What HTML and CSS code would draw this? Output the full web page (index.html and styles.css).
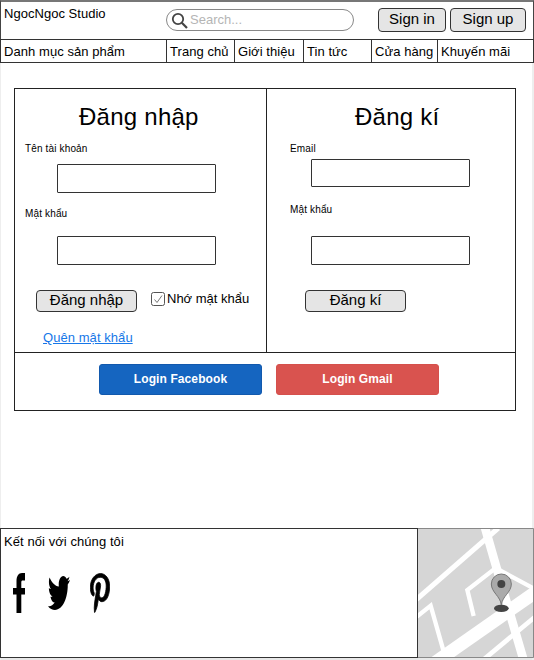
FILE: index.html
```html
<!DOCTYPE html>
<html lang="vi">
<head>
<meta charset="utf-8">
<title>NgocNgoc Studio</title>
<link rel="stylesheet" href="styles.css">
</head>
<body>
<div class="page">
  <header class="header">
    <div class="brand">NgocNgoc Studio</div>
    <div class="search">
      <svg class="search-icon" width="18" height="18" viewBox="0 0 18 18"><circle cx="7" cy="7" r="5.2" fill="none" stroke="#444" stroke-width="1.8"/><path d="M10.8 10.8L16 16" stroke="#444" stroke-width="2.2"/></svg>
      <span>Search...</span>
    </div>
    <button class="btn btn-in">Sign in</button>
    <button class="btn btn-up">Sign up</button>
  </header>
  <nav class="nav">
    <a>Danh mục sản phẩm</a><a>Trang chủ</a><a>Giới thiệu</a><a>Tin tức</a><a>Cửa hàng</a><a>Khuyến mãi</a>
  </nav>
  <main class="panel">
    <div class="forms">
      <section class="form login">
        <h1>Đăng nhập</h1>
        <label>Tên tài khoản</label>
        <div class="field"></div>
        <label class="second">Mật khẩu</label>
        <div class="field"></div>
        <div class="actions">
          <button class="btn btn-form">Đăng nhập</button>
          <svg class="check" width="14" height="14" viewBox="0 0 14 14"><rect x=".5" y=".5" width="13" height="13" rx="2" fill="#fff" stroke="#555"/><path d="M3.5 7.5L6 10.5L11 3.5" fill="none" stroke="#777"/></svg>
          <span class="remember">Nhớ mật khẩu</span>
        </div>
        <a class="forgot">Quên mật khẩu</a>
      </section>
      <section class="form register">
        <h1>Đăng kí</h1>
        <label>Email</label>
        <div class="field"></div>
        <label class="second">Mật khẩu</label>
        <div class="field"></div>
        <div class="actions">
          <button class="btn btn-form">Đăng kí</button>
        </div>
      </section>
    </div>
    <div class="social-login">
      <button class="social facebook">Login Facebook</button>
      <button class="social gmail">Login Gmail</button>
    </div>
  </main>
  <footer class="footer">
    <div class="connect">
      <p>Kết nối với chúng tôi</p>
      <div class="icons">
        <svg width="12" height="40" viewBox="0 0 12 40"><path d="M3.5 40V21.5H0V15h3.5V8.500C3.500 3 5.500 0 9 0H12V7.500H9.700C8.700 7.500 8.300 8 8.300 9.500V15H12V21.500H8.300V40Z"/></svg>
        <svg class="bird" width="22" height="34" viewBox="0 48 512 416" preserveAspectRatio="none"><path d="M459.37 151.716c.325 4.548.325 9.097.325 13.645 0 138.72-105.583 298.558-298.558 298.558-59.452 0-114.68-17.219-161.137-47.106 8.447.974 16.568 1.299 25.34 1.299 49.055 0 94.213-16.568 130.274-44.832-46.132-.975-84.792-31.188-98.112-72.772 6.498.974 12.995 1.624 19.818 1.624 9.421 0 18.843-1.3 27.614-3.573-48.081-9.747-84.143-51.98-84.143-102.985v-1.299c13.969 7.797 30.214 12.67 47.431 13.319-28.264-18.843-46.781-51.005-46.781-87.391 0-19.492 5.197-37.36 14.294-52.954 51.655 63.675 129.3 105.258 216.365 109.807-1.624-7.797-2.599-15.918-2.599-24.04 0-57.828 46.782-104.934 104.934-104.934 30.213 0 57.502 12.67 76.67 33.137 23.715-4.548 46.456-13.32 66.599-25.34-7.798 24.366-24.366 44.833-46.132 57.827 21.117-2.273 41.584-8.122 60.426-16.243-14.292 20.791-32.161 39.308-52.628 54.253z"/></svg>
        <svg class="pin" width="20" height="40" viewBox="-6 0 396 512" preserveAspectRatio="none"><path stroke="#000" stroke-width="12" d="M204 6.5C101.4 6.5 0 74.9 0 185.6 0 256 39.6 296 63.6 296c9.9 0 15.6-27.600 15.6-35.400 0-9.300-23.700-29.100-23.700-67.800 0-80.400 61.200-137.400 140.400-137.400 68.100 0 118.500 38.700 118.500 109.800 0 53.100-21.300 152.700-90.300 152.700-24.900 0-46.200-18-46.200-43.800 0-37.800 26.400-74.400 26.400-113.400 0-66.200-93.900-54.200-93.900 25.800 0 16.800 2.100 35.400 9.600 50.700-13.800 59.400-42 147.900-42 209.100 0 18.900 2.700 37.500 4.500 56.400 3.400 3.800 1.700 3.400 6.900 1.500 50.400-69 48.600-82.500 71.400-172.800 12.300 23.400 44.100 36 69.300 36 106.200 0 153.900-103.500 153.900-196.800C384 71.300 298.200 6.500 204 6.500z"/></svg>
      </div>
    </div>
    <svg class="map" width="116" height="130" viewBox="21 18 348 390">
      <rect x="21" y="18" width="348" height="390" fill="#d6d6d6"/>
      <g fill="none" stroke="#fff">
        <path d="M10 238L262 18" stroke-width="15"/>
        <path d="M220 10L258 142L338 415" stroke-width="26"/>
        <path d="M60 430L400 192" stroke-width="39"/>
        <path d="M188 282L169 204L254 138L375 203" stroke-width="13"/>
        <path d="M10 290L59 251L99 392" stroke-width="13"/>
        <path d="M215 415L380 278" stroke-width="14"/>
      </g>
      <ellipse cx="271" cy="259" rx="22" ry="11" fill="#444"/>
      <path d="M271 249C268 222 241 211 241 186A30 30 0 0 1 301 186C301 211 274 222 271 249Z" fill="#aaa" stroke="#777" stroke-width="3"/>
      <circle cx="271" cy="186" r="12" fill="#444"/>
      <path d="M21 19.500H367.500V406.500H21" fill="none" stroke="#888" stroke-width="3"/>
    </svg>
  </footer>
</div>
</body>
</html>
```

FILE: styles.css
```css
* { box-sizing: border-box; }
body {
  margin: 0;
  background: #fff;
  color: #000;
  font: 13px/16px "Liberation Sans", Arial, sans-serif;
}
.page {
  width: 534px;
  height: 660px;
  padding: 0 0 2px;
  display: flex;
  flex-direction: column;
  background: linear-gradient(#e8e8e8, #e8e8e8) bottom / 100% 2px no-repeat;
  box-shadow: inset 1px 0 #eee, inset -2px 0 #eee;
  overflow: hidden;
}
.header {
  height: 39px;
  border: 1px solid #444;
  border-top: 2px solid #777;
  border-bottom: 0;
  display: flex;
  flex: none;
  background: #fff;
}
.brand { width: 165px; padding: 4px 0 0 3px; letter-spacing: .03px; }
.search {
  width: 188px;
  height: 22px;
  margin-top: 7px;
  border: 1px solid #888;
  border-radius: 11px;
  display: flex;
  align-items: center;
  color: #b5b5b5;
  line-height: 20px;
}
.search-icon { margin: 1px 1px 0 4px; }
.btn {
  border: 1px solid #333;
  border-radius: 4px;
  background: #e5e5e5;
  color: #000;
  font: 15px/18px "Liberation Sans", Arial, sans-serif;
  padding: 0 0 2px;
  flex: none;
}
.btn-in, .btn-up { height: 24px; margin-top: 6px; }
.btn-in { width: 68px; margin-left: 24px; }
.btn-up { width: 76px; margin-left: 4px; }
.nav {
  display: grid;
  grid-template-columns: 166px 68px 69px 68px 66px 97px;
  height: 24px;
  border-top: 1px solid #333;
  border-bottom: 1px solid #333;
  flex: none;
  background: #fff;
  letter-spacing: .06px;
}
.nav a { padding: 4px 0 0 3px; border-left: 1px solid #333; white-space: nowrap; }
.nav a:last-child { border-right: 1px solid #333; }
.panel {
  width: 502px;
  height: 323px;
  margin: 25px 0 0 14px;
  border: 1px solid #222;
  flex: none;
}
.forms { display: grid; grid-template-columns: 252px 248px; height: 264px; border-bottom: 1px solid #222; }
.form { display: flex; flex-direction: column; align-items: flex-start; }
.register { border-left: 1px solid #222; margin-left: -1px; }
h1 { font-size: 24px; line-height: 28px; font-weight: 400; letter-spacing: .25px; margin: 14px 0 0 64px; }
label { font-size: 10px; line-height: 12px; letter-spacing: .15px; margin: 12px 0 0 10px; }
.field { width: 159px; height: 29px; border: 1px solid #333; border-radius: 1px; margin: 9px 0 0 42px; }
.login .second { margin-top: 15px; }
.login .second + .field { margin-top: 16px; }
.register h1 { margin-left: 88px; }
.register label { margin-left: 23px; }
.register .field { height: 28px; margin: 4px 0 0 44px; }
.register .second { margin-top: 17px; }
.register .second + .field { height: 29px; margin-top: 20px; }
.actions { display: flex; margin: 25px 0 0 21px; }
.register .actions { margin-left: 38px; }
.btn-form { width: 101px; height: 22px; }
.check { margin: 2px 2px 0 14px; }
.remember { margin-top: 1px; white-space: nowrap; }
.forgot { margin: 18px 0 0 28px; color: #1677e8; text-decoration: underline; letter-spacing: .06px; }
.social-login { display: flex; gap: 14px; padding: 11px 0 0 84px; }
.social {
  width: 163px;
  height: 31px;
  padding: 0 0 2px;
  border: 1px solid #1259ad;
  border-radius: 3px;
  background: #1565c0;
  color: #fff;
  font: bold 12px/16px "Liberation Sans", Arial, sans-serif;
  letter-spacing: .1px;
}
.gmail { background: #d9534f; border-color: #d5504c; }
.footer { display: flex; height: 130px; margin-top: auto; flex: none; }
.connect { width: 418px; border: 1px solid #333; flex: none; background: #fff; }
.connect p { margin: 5px 0 0 3px; letter-spacing: .07px; }
.icons { display: flex; align-items: center; margin: 23px 0 0 12px; }
.bird { margin: 0 0 0 23px; }
.pin { margin-left: 20px; }
.map { flex: none; display: block; }
```
